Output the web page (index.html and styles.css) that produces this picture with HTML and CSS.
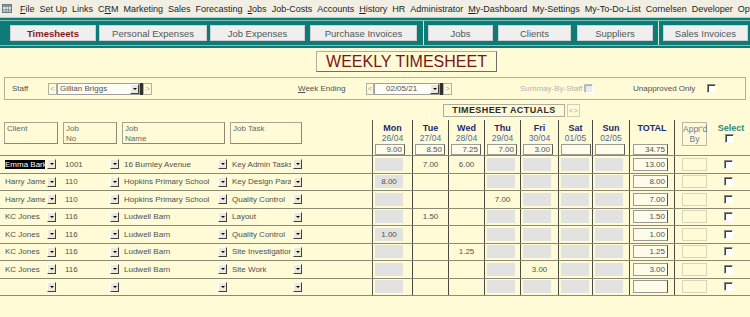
FILE: index.html
```html
<!DOCTYPE html>
<html>
	<head>
		<title>Weekly Timesheet</title>
		<meta charset="utf-8">
		<link rel="stylesheet" href="styles.css">
	</head>
	<body>
		<div class="menubar">
			<svg class="appicon" width="10" height="9" viewBox="0 0 10 9">
				<rect x="0.5" y="0.5" width="9" height="8" fill="#dfe6e6" stroke="#6b7c80"/>
				<rect x="1" y="1" width="8" height="2" fill="#7d96a0"/>
				<path d="M1 5.5H9M1 7H9M4 3V8.5M6.5 3V8.5" stroke="#6b7c80" stroke-width="0.6"/>
			</svg>
			<span><u>F</u>ile</span>
			<span>Set Up</span>
			<span>Links</span>
			<span>C<u>R</u>M</span>
			<span>Marketing</span>
			<span>Sales</span>
			<span>Forecasting</span>
			<span><u>J</u>obs</span>
			<span>Job-Costs</span>
			<span>Accounts</span>
			<span><u>H</u>istory</span>
			<span>HR</span>
			<span>Administrator</span>
			<span><u>M</u>y-Dashboard</span>
			<span>My-Settings</span>
			<span>My-To-Do-List</span>
			<span>Cornelsen</span>
			<span>Developer</span>
			<span>Opti</span>
		</div>

		<div class="tabbar">
			<div class="tabframe">
				<div class="tab active tab-timesheets">Timesheets</div>
				<div class="tab tab-personal">Personal Expenses</div>
				<div class="tab tab-jobexp">Job Expenses</div>
				<div class="tab tab-purchase">Purchase Invoices</div>
				<div class="tabsep"></div>
				<div class="tab tab-jobs">Jobs</div>
				<div class="tab tab-clients">Clients</div>
				<div class="tab tab-suppliers">Suppliers</div>
				<div class="tabsep"></div>
				<div class="tab tab-sales">Sales Invoices</div>
			</div>
		</div>

		<div class="title">WEEKLY TIMESHEET</div>

		<div class="filters">
			<span class="flabel staff-label">Staff</span>
			<div class="picker staff-picker">
				<span class="nav">&lt;</span>
				<span class="pick-field"><span class="pick-text">Gillian Briggs</span><span class="drop"></span></span>
				<span class="pick-bar"></span>
				<span class="nav">&gt;</span>
			</div>
			<span class="flabel week-label"><u>W</u>eek Ending</span>
			<div class="picker date-picker">
				<span class="nav">&lt;</span>
				<span class="pick-field"><span class="pick-text date-text">02/05/21</span><span class="drop"></span></span>
				<span class="pick-bar"></span>
				<span class="nav">&gt;</span>
			</div>
			<span class="flabel summary-label">Summay-By-Staff</span>
			<span class="check disabled"></span>
			<span class="flabel unapproved-label">Unapproved Only</span>
			<span class="check"></span>
		</div>

		<div class="actuals">
			<span class="actuals-label">TIMESHEET ACTUALS</span>
			<span class="actuals-nav">&lt;&gt;</span>
		</div>

		<div class="sheet">
			<div class="sheet-row head">
				<div></div>
				<div class="hcell"><div class="hbox hbox-client">Client</div></div>
				<div class="hcell"><div class="hbox hbox-jobno">Job<br>No</div></div>
				<div class="hcell"><div class="hbox hbox-jobname">Job<br>Name</div></div>
				<div class="hcell"><div class="hbox hbox-task">Job Task</div></div>
				<div class="gapcol"></div>
				<div class="day"><div class="dname">Mon</div><div class="ddate">26/04</div><div class="dtot">9.00</div></div>
				<div class="day"><div class="dname">Tue</div><div class="ddate">27/04</div><div class="dtot">8.50</div></div>
				<div class="day"><div class="dname">Wed</div><div class="ddate">28/04</div><div class="dtot">7.25</div></div>
				<div class="day"><div class="dname">Thu</div><div class="ddate">29/04</div><div class="dtot">7.00</div></div>
				<div class="day"><div class="dname">Fri</div><div class="ddate">30/04</div><div class="dtot">3.00</div></div>
				<div class="day"><div class="dname">Sat</div><div class="ddate">01/05</div><div class="dtot"></div></div>
				<div class="day"><div class="dname">Sun</div><div class="ddate">02/05</div><div class="dtot"></div></div>
				<div class="day total-head"><div class="dname">TOTAL</div><div class="ddate">&nbsp;</div><div class="dtot grand">34.75</div></div>
				<div class="appr-head"><div class="appr-box">Appr'd<br>By</div></div>
				<div class="select-head"><div class="select-label">Select</div><span class="check"></span></div>
			</div>

			<div class="sheet-row">
				<div></div>
				<div class="cell c-client"><span class="field f-client"><span class="selected">Emma Barker</span></span><span class="drop"></span></div>
				<div class="cell c-jobno"><span class="field f-jobno">1001</span><span class="drop"></span></div>
				<div class="cell c-jobname"><span class="field f-jobname">16 Burnley Avenue</span><span class="drop"></span></div>
				<div class="cell c-task"><span class="field f-task">Key Admin Tasks</span><span class="drop"></span></div>
				<div class="gapcol"></div>
				<div class="dcell"><span class="gray"></span></div>
				<div class="dcell"><span class="val">7.00</span></div>
				<div class="dcell"><span class="val">6.00</span></div>
				<div class="dcell"><span class="gray"></span></div>
				<div class="dcell"><span class="gray"></span></div>
				<div class="dcell"><span class="gray"></span></div>
				<div class="dcell"><span class="gray"></span></div>
				<div class="dcell tcell"><span class="tbox">13.00</span></div>
				<div class="acell"><span class="abox"></span></div>
				<div class="scell"><span class="check"></span></div>
			</div>

			<div class="sheet-row">
				<div></div>
				<div class="cell c-client"><span class="field f-client">Harry James</span><span class="drop"></span></div>
				<div class="cell c-jobno"><span class="field f-jobno">110</span><span class="drop"></span></div>
				<div class="cell c-jobname"><span class="field f-jobname">Hopkins Primary School</span><span class="drop"></span></div>
				<div class="cell c-task"><span class="field f-task">Key Design Parameters</span><span class="drop"></span></div>
				<div class="gapcol"></div>
				<div class="dcell"><span class="gray">8.00</span></div>
				<div class="dcell"></div>
				<div class="dcell"></div>
				<div class="dcell"><span class="gray"></span></div>
				<div class="dcell"><span class="gray"></span></div>
				<div class="dcell"><span class="gray"></span></div>
				<div class="dcell"><span class="gray"></span></div>
				<div class="dcell tcell"><span class="tbox">8.00</span></div>
				<div class="acell"><span class="abox"></span></div>
				<div class="scell"><span class="check"></span></div>
			</div>

			<div class="sheet-row">
				<div></div>
				<div class="cell c-client"><span class="field f-client">Harry James</span><span class="drop"></span></div>
				<div class="cell c-jobno"><span class="field f-jobno">110</span><span class="drop"></span></div>
				<div class="cell c-jobname"><span class="field f-jobname">Hopkins Primary School</span><span class="drop"></span></div>
				<div class="cell c-task"><span class="field f-task">Quality Control</span><span class="drop"></span></div>
				<div class="gapcol"></div>
				<div class="dcell"><span class="gray"></span></div>
				<div class="dcell"></div>
				<div class="dcell"></div>
				<div class="dcell"><span class="val">7.00</span></div>
				<div class="dcell"><span class="gray"></span></div>
				<div class="dcell"><span class="gray"></span></div>
				<div class="dcell"><span class="gray"></span></div>
				<div class="dcell tcell"><span class="tbox">7.00</span></div>
				<div class="acell"><span class="abox"></span></div>
				<div class="scell"><span class="check"></span></div>
			</div>

			<div class="sheet-row">
				<div></div>
				<div class="cell c-client"><span class="field f-client">KC Jones</span><span class="drop"></span></div>
				<div class="cell c-jobno"><span class="field f-jobno">116</span><span class="drop"></span></div>
				<div class="cell c-jobname"><span class="field f-jobname">Ludwell Barn</span><span class="drop"></span></div>
				<div class="cell c-task"><span class="field f-task">Layout</span><span class="drop"></span></div>
				<div class="gapcol"></div>
				<div class="dcell"><span class="gray"></span></div>
				<div class="dcell"><span class="val">1.50</span></div>
				<div class="dcell"></div>
				<div class="dcell"><span class="gray"></span></div>
				<div class="dcell"><span class="gray"></span></div>
				<div class="dcell"><span class="gray"></span></div>
				<div class="dcell"><span class="gray"></span></div>
				<div class="dcell tcell"><span class="tbox">1.50</span></div>
				<div class="acell"><span class="abox"></span></div>
				<div class="scell"><span class="check"></span></div>
			</div>

			<div class="sheet-row">
				<div></div>
				<div class="cell c-client"><span class="field f-client">KC Jones</span><span class="drop"></span></div>
				<div class="cell c-jobno"><span class="field f-jobno">116</span><span class="drop"></span></div>
				<div class="cell c-jobname"><span class="field f-jobname">Ludwell Barn</span><span class="drop"></span></div>
				<div class="cell c-task"><span class="field f-task">Quality Control</span><span class="drop"></span></div>
				<div class="gapcol"></div>
				<div class="dcell"><span class="gray">1.00</span></div>
				<div class="dcell"></div>
				<div class="dcell"></div>
				<div class="dcell"><span class="gray"></span></div>
				<div class="dcell"><span class="gray"></span></div>
				<div class="dcell"><span class="gray"></span></div>
				<div class="dcell"><span class="gray"></span></div>
				<div class="dcell tcell"><span class="tbox">1.00</span></div>
				<div class="acell"><span class="abox"></span></div>
				<div class="scell"><span class="check"></span></div>
			</div>

			<div class="sheet-row">
				<div></div>
				<div class="cell c-client"><span class="field f-client">KC Jones</span><span class="drop"></span></div>
				<div class="cell c-jobno"><span class="field f-jobno">116</span><span class="drop"></span></div>
				<div class="cell c-jobname"><span class="field f-jobname">Ludwell Barn</span><span class="drop"></span></div>
				<div class="cell c-task"><span class="field f-task">Site Investigation</span><span class="drop"></span></div>
				<div class="gapcol"></div>
				<div class="dcell"><span class="gray"></span></div>
				<div class="dcell"></div>
				<div class="dcell"><span class="val">1.25</span></div>
				<div class="dcell"><span class="gray"></span></div>
				<div class="dcell"><span class="gray"></span></div>
				<div class="dcell"><span class="gray"></span></div>
				<div class="dcell"><span class="gray"></span></div>
				<div class="dcell tcell"><span class="tbox">1.25</span></div>
				<div class="acell"><span class="abox"></span></div>
				<div class="scell"><span class="check"></span></div>
			</div>

			<div class="sheet-row">
				<div></div>
				<div class="cell c-client"><span class="field f-client">KC Jones</span><span class="drop"></span></div>
				<div class="cell c-jobno"><span class="field f-jobno">116</span><span class="drop"></span></div>
				<div class="cell c-jobname"><span class="field f-jobname">Ludwell Barn</span><span class="drop"></span></div>
				<div class="cell c-task"><span class="field f-task">Site Work</span><span class="drop"></span></div>
				<div class="gapcol"></div>
				<div class="dcell"><span class="gray"></span></div>
				<div class="dcell"></div>
				<div class="dcell"></div>
				<div class="dcell"><span class="gray"></span></div>
				<div class="dcell"><span class="val">3.00</span></div>
				<div class="dcell"><span class="gray"></span></div>
				<div class="dcell"><span class="gray"></span></div>
				<div class="dcell tcell"><span class="tbox">3.00</span></div>
				<div class="acell"><span class="abox"></span></div>
				<div class="scell"><span class="check"></span></div>
			</div>

			<div class="sheet-row">
				<div></div>
				<div class="cell c-client"><span class="field f-client"></span><span class="drop"></span></div>
				<div class="cell c-jobno"><span class="field f-jobno"></span><span class="drop"></span></div>
				<div class="cell c-jobname"><span class="field f-jobname"></span><span class="drop"></span></div>
				<div class="cell c-task"><span class="field f-task"></span><span class="drop"></span></div>
				<div class="gapcol"></div>
				<div class="dcell"><span class="gray"></span></div>
				<div class="dcell"></div>
				<div class="dcell"></div>
				<div class="dcell"><span class="gray"></span></div>
				<div class="dcell"><span class="gray"></span></div>
				<div class="dcell"><span class="gray"></span></div>
				<div class="dcell"><span class="gray"></span></div>
				<div class="dcell tcell"><span class="tbox"></span></div>
				<div class="acell"><span class="abox"></span></div>
				<div class="scell"><span class="check"></span></div>
			</div>
		</div>
	</body>
</html>
```

FILE: styles.css
```css
* {
	box-sizing: border-box;
}

body {
	margin: 0;
	width: 750px;
	height: 317px;
	overflow: hidden;
	background-color: #fffbd7;
	color: #505050;
	font-family: "Liberation Sans", Arial, sans-serif;
	font-size: 8px;
}

/* menu */
.menubar {
	height: 18px;
	display: flex;
	align-items: center;
	padding-left: 2px;
	background-color: #f1efe4;
	border-bottom: 1px solid #c9c6b6;
	color: #1e1e1e;
	font-size: 9px;
	white-space: nowrap;
	overflow: hidden;
}

.appicon {
	margin-right: 8px;
	flex: none;
}

.menubar span {
	margin-right: 5px;
}

/* tabs */
.tabbar {
	height: 30px;
	padding: 2px 0;
	background-color: #0e7b76;
}

.tabframe {
	height: 26px;
	display: flex;
	align-items: center;
	padding-left: 10px;
	border-top: 1px solid #7cc4b8;
	border-bottom: 1px solid #7cc4b8;
}

.tab {
	height: 16px;
	display: flex;
	align-items: center;
	justify-content: center;
	background-color: #efefef;
	border: 1px solid #cfcfcf;
	color: #555;
	font-size: 9.5px;
	flex: none;
}

.tab.active {
	color: #8a1a1a;
	font-weight: bold;
}

.tab-timesheets { width: 86px; }
.tab-personal { width: 108px; margin-left: 3px; }
.tab-jobexp { width: 95px; margin-left: 3px; }
.tab-purchase { width: 107px; margin-left: 5px; }
.tab-jobs { width: 65px; margin-left: 4px; }
.tab-clients { width: 73px; margin-left: 5px; }
.tab-suppliers { width: 76px; margin-left: 6px; }
.tab-sales { width: 85px; margin-left: 4px; }

.tabsep {
	width: 1px;
	align-self: stretch;
	margin-left: 6px;
	background-color: #d4ead0;
}

.tab-suppliers + .tabsep {
	margin-left: 5px;
}

/* title */
.title {
	width: 181px;
	height: 21px;
	margin: 3px 0 0 316px;
	border: 1px solid #b0aea0;
	border-right-color: #6e6e6e;
	border-bottom-color: #6e6e6e;
	color: #7b1414;
	font-size: 16px;
	line-height: 19px;
	text-align: center;
}

/* filter panel */
.filters {
	height: 23px;
	margin: 5px 4px 0 4px;
	padding-left: 7px;
	display: flex;
	align-items: center;
	border: 1px solid #b4af94;
}

.flabel {
	flex: none;
	white-space: nowrap;
}

.staff-label { width: 36px; }
.week-label { width: 68px; margin-left: 146px; }
.summary-label { width: 64px; margin-left: 68px; color: #b4b4b0; }
.unapproved-label { width: 74px; margin-left: 40px; }

.picker {
	display: flex;
	height: 12px;
	flex: none;
}

.nav {
	width: 9px;
	border: 1px solid #b0b0a8;
	color: #a8a8a8;
	font-size: 8px;
	line-height: 10px;
	text-align: center;
}

.pick-field {
	display: flex;
	align-items: center;
	justify-content: space-between;
	border: 1px solid #a0a0a0;
	background-color: #fffef6;
	padding-left: 2px;
}

.staff-picker .pick-field { width: 83px; }
.date-picker .pick-field { width: 66px; }
.date-picker .nav:first-child { width: 8px; }

.pick-text {
	line-height: 10px;
}

.date-text {
	padding-left: 9px;
}

.pick-bar {
	width: 3px;
	background-color: #303030;
}

.drop {
	width: 9px;
	height: 10px;
	flex: none;
	display: flex;
	align-items: center;
	justify-content: center;
	background-color: #ece9d8;
	border: 1px solid;
	border-color: #fff #404040 #404040 #fff;
}

.drop::after {
	content: "";
	border-left: 2px solid transparent;
	border-right: 2px solid transparent;
	border-top: 2px solid #000;
}

.check {
	width: 9px;
	height: 9px;
	flex: none;
	background-color: #fff;
	border: 1px solid;
	border-color: #8a8a8a #fff #fff #8a8a8a;
	box-shadow: inset 1px 1px 0 #404040;
}

.check.disabled {
	background-color: #ececec;
	border-color: #c0c0c0 #fff #fff #c0c0c0;
	box-shadow: inset 1px 1px 0 #b0b0b0;
}

/* actuals caption */
.actuals {
	display: flex;
	margin: 4px 0 0 443px;
	height: 13px;
}

.actuals-label {
	width: 122px;
	border: 1px solid #aeac9c;
	color: #2c2c2c;
	font-size: 9px;
	font-weight: bold;
	letter-spacing: 0.4px;
	line-height: 11px;
	text-align: center;
}

.actuals-nav {
	width: 13px;
	margin-left: 2px;
	border: 1px solid #cfcdbd;
	color: #b0b0b0;
	font-size: 8px;
	line-height: 11px;
	text-align: center;
}

/* sheet */
.sheet {
	margin-top: 3px;
}

.sheet-row {
	display: grid;
	grid-template-columns: 4px 56px 60px 108px 76px 69px 40px 36px 36px 36px 38px 34px 37px 45px 37px 38px;
	height: 17.5px;
	border-bottom: 1px solid #8d8a74;
}

.sheet-row.head {
	height: 36px;
}

.gapcol {
	border-right: 1px solid #5a5a52;
}

.hcell {
	padding-top: 2px;
}

.hbox {
	height: 22px;
	padding: 1px 2px;
	border: 1px solid #a8a48e;
	border-right-color: #8c8872;
	border-bottom-color: #8c8872;
	color: #666;
	line-height: 10px;
}

.hbox-client { width: 54px; }
.hbox-jobno { width: 54px; margin-left: 3px; }
.hbox-jobname { width: 103px; margin-left: 2px; }
.hbox-task { width: 72px; margin-left: 2px; }

.day {
	padding-top: 3px;
	border-right: 1px solid #4a4a44;
	text-align: center;
}

.dname {
	color: #1c2a6e;
	font-size: 9px;
	font-weight: bold;
	line-height: 10px;
}

.ddate {
	color: #4d6c9c;
	font-size: 8.5px;
	line-height: 10px;
}

.dtot {
	width: 30px;
	height: 11px;
	margin: 1px 0 0 2px;
	padding-right: 2px;
	border: 1px solid #9c9c96;
	border-right-color: #5a5a5a;
	background-color: #fffde9;
	line-height: 9px;
	text-align: right;
}

.dtot.grand {
	width: 35px;
	margin-left: 3px;
}

.appr-head {
	padding: 2px 0 0 7px;
}

.appr-box {
	width: 25px;
	height: 24px;
	padding-top: 1px;
	border: 1px solid #bcb8a2;
	color: #6a7a9a;
	font-size: 8.5px;
	line-height: 10px;
	text-align: center;
}

.select-head {
	padding-top: 3px;
	display: flex;
	flex-direction: column;
	align-items: center;
}

.select-label {
	color: #2a8a7a;
	font-size: 9px;
	font-weight: bold;
	line-height: 10px;
}

.select-head .check {
	margin: 1px 0 0 -4px;
}

/* data rows */
.cell {
	display: flex;
	align-items: center;
}

.field {
	height: 13px;
	overflow: hidden;
	white-space: nowrap;
	line-height: 13px;
	flex: none;
}

.selected {
	background-color: #000;
	color: #fff;
}

.f-client { width: 40px; margin-left: 1px; }
.c-client .drop { margin-left: 2px; }
.f-jobno { width: 45px; margin-left: 3px; padding-left: 2px; }
.c-jobno .drop { margin-left: 2px; }
.f-jobname { width: 93px; margin-left: 2px; padding-left: 2px; }
.c-jobname .drop { margin-left: 3px; }
.f-task { width: 61px; margin-left: 2px; padding-left: 2px; }
.c-task .drop { margin-left: 2px; }

.dcell {
	display: flex;
	align-items: center;
	justify-content: center;
	border-right: 1px solid #4a4a44;
}

.dcell .gray {
	width: 28px;
	height: 13px;
	margin-right: auto;
	margin-left: 2px;
	background-color: #e2e2e0;
	line-height: 13px;
	text-align: center;
}

.val {
	line-height: 13px;
}

.tcell {
	justify-content: flex-start;
}

.tbox {
	width: 35px;
	height: 13px;
	margin-left: 3px;
	padding-right: 2px;
	border: 1px solid #9a9a94;
	border-right-color: #4e4e4e;
	background-color: #fffde9;
	line-height: 11px;
	text-align: right;
}

.acell {
	display: flex;
	align-items: center;
	padding-left: 7px;
}

.abox {
	width: 25px;
	height: 13px;
	border: 1px solid #d8d4b8;
}

.scell {
	display: flex;
	align-items: center;
	padding-left: 12px;
}
```
